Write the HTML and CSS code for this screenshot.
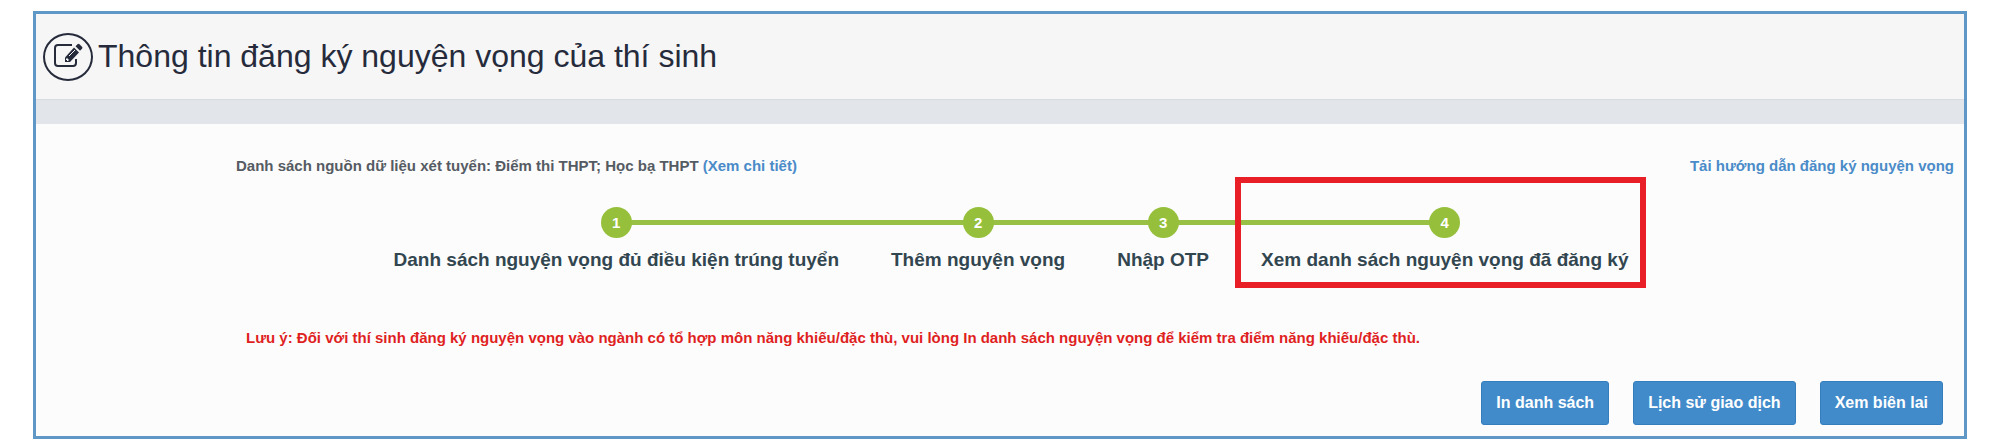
FILE: index.html
```html
<!DOCTYPE html>
<html lang="vi">
<head>
    <meta charset="UTF-8">
    <meta name="viewport" content="width=device-width, initial-scale=1.0">
    <title>Thông tin đăng ký nguyện vọng của thí sinh</title>
    <link rel="stylesheet" href="styles.css">
</head>
<body>
    <div class="page">
        <header class="page-header">
            <span class="header-icon">
                <svg viewBox="0 0 30 26" width="30" height="26" aria-hidden="true">
                    <path d="M19 2H5a3 3 0 0 0-3 3v15a3 3 0 0 0 3 3h15a3 3 0 0 0 3-3v-4" fill="none" stroke="currentColor" stroke-width="2"/>
                    <path d="M12 14.500L21 4.500l5 5-9 9.500h-5z" fill="currentColor"/>
                    <path d="M22.500 3.300l2-2q1-1 2 0l2.500 2.500q1 1 0 2l-2 2z" fill="currentColor"/>
                    <path d="M14 15l2 2-1 1h-1v-1h-1v-1z" fill="#f6f6f6"/>
                    <path d="M16 13l6-6" stroke="#f6f6f6" stroke-width="1"/>
                </svg>
            </span>
            <h1>Thông tin đăng ký nguyện vọng của thí sinh</h1>
        </header>
        <div class="band"></div>

        <main class="content">
            <div class="source-row">
                <p>Danh sách nguồn dữ liệu xét tuyển: Điểm thi THPT; Học bạ THPT <a href="#">(Xem chi tiết)</a></p>
                <a href="#">Tải hướng dẫn đăng ký nguyện vọng</a>
            </div>

            <ol class="steps">
                <li class="step"><span class="num">1</span>Danh sách nguyện vọng đủ điều kiện trúng tuyển</li>
                <li class="step"><span class="num">2</span>Thêm nguyện vọng</li>
                <li class="step"><span class="num">3</span>Nhập OTP</li>
                <li class="step current"><span class="num">4</span>Xem danh sách nguyện vọng đã đăng ký</li>
            </ol>

            <p class="note">Lưu ý: Đối với thí sinh đăng ký nguyện vọng vào ngành có tổ hợp môn năng khiếu/đặc thù, vui lòng In danh sách nguyện vọng để kiểm tra điểm năng khiếu/đặc thù.</p>

            <div class="actions">
                <button type="button">In danh sách</button>
                <button type="button">Lịch sử giao dịch</button>
                <button type="button">Xem biên lai</button>
            </div>
        </main>
    </div>
</body>
</html>
```
FILE: styles.css
```css
* {
    box-sizing: border-box;
}
body {
    margin: 0;
    padding: 11px 33px 4px;
    background-color: #fff;
    color: #555b63;
    font-family: "Liberation Sans", Arial, sans-serif;
    font-size: 15px;
    line-height: 20px;
    font-weight: bold;
}
.page {
    border: 3px solid #5f97c6;
    background-color: #fcfcfc;
}
.page-header {
    display: flex;
    align-items: center;
    gap: 5px;
    height: 85px;
    padding: 0 7px;
    background-color: #f6f6f6;
    color: #262b3c;
}
.header-icon {
    display: flex;
    align-items: center;
    justify-content: center;
    width: 50px;
    height: 48px;
    padding-bottom: 2px;
    border: 2px solid #262b3c;
    border-radius: 50%;
}
h1 {
    margin: 0;
    padding-bottom: 2px;
    font-size: 32px;
    line-height: 40px;
    font-weight: normal;
}
.band {
    height: 25px;
    border-top: 1px solid #d8dce0;
    background-color: #e2e5e9;
}
a {
    color: #4a8bc8;
    text-decoration: none;
}
p {
    margin: 0;
}
.source-row {
    display: flex;
    justify-content: space-between;
    padding: 32px 10px 0 200px;
}
.steps {
    display: flex;
    justify-content: center;
    margin: 1px 0 0;
    padding: 0 0 0 22px;
    list-style: none;
    color: #324650;
    font-size: 19px;
    line-height: 24px;
}
.step {
    position: relative;
    display: flex;
    flex-direction: column;
    align-items: center;
    gap: 10px;
    padding: 30px 26px 22px;
    white-space: nowrap;
}
/* connecting line behind the numbers */
.step::before {
    content: "";
    position: absolute;
    top: 43px;
    left: 0;
    width: 100%;
    height: 5px;
    background-color: #98c044;
}
.step:first-child::before {
    left: 50%;
    width: 50%;
}
.step:last-child::before {
    width: 50%;
}
.num {
    position: relative;
    width: 31px;
    height: 31px;
    border-radius: 50%;
    background-color: #96c03c;
    color: #fff;
    font-size: 15px;
    line-height: 31px;
    text-align: center;
}
/* frame round the current step */
.current::after {
    content: "";
    position: absolute;
    top: 0;
    bottom: 6px;
    left: 0;
    right: 8px;
    border: 6px solid #e81f27;
}
.note {
    padding: 34px 20px 0 210px;
    color: #e01f1f;
}
.actions {
    display: flex;
    justify-content: flex-end;
    gap: 24px;
    padding: 33px 21px 11px;
}
button {
    height: 44px;
    padding: 0 14px;
    border: 1px solid #357ebd;
    border-radius: 3px;
    background-color: #428bca;
    color: #fff;
    font-family: inherit;
    font-size: 16px;
    font-weight: bold;
    cursor: pointer;
}
button:hover {
    background-color: #3276b1;
}
```
